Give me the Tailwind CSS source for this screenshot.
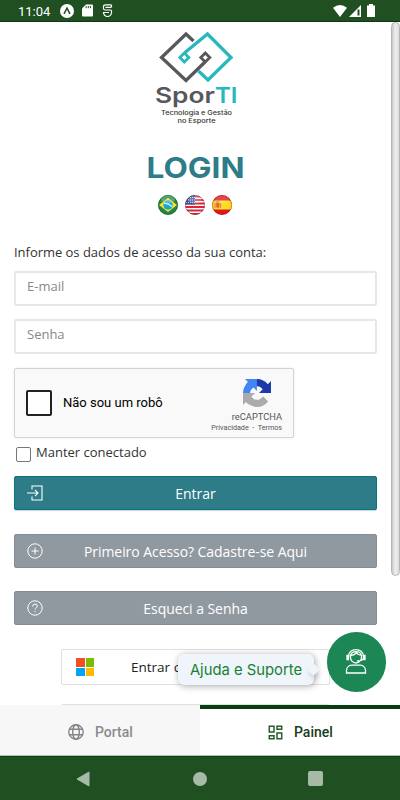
<!DOCTYPE html>
<html lang="pt-BR">
  <head>
    <meta charset="UTF-8" />
    <meta name="viewport" content="width=device-width, initial-scale=1.0" />
    <title>SporTI - Login</title>
    <script src="https://cdn.jsdelivr.net/npm/@tailwindcss/browser@4"></script>
  </head>
  <body>
    <div class="relative flex flex-col w-[400px] h-[800px] overflow-hidden bg-white font-['Open_Sans',sans-serif]">
      <!-- Status bar -->
      <header class="flex shrink-0 items-center justify-between h-[22px] pl-[18px] pr-[25px] bg-[#205022] border-b border-[#0c3510] text-white">
        <div class="flex items-center">
          <span class="w-[42px] pt-px text-[13px] leading-none font-['Roboto',sans-serif]">11:04</span>
          <svg class="w-[14px] h-[14px]" viewBox="0 0 14 14">
            <circle cx="7" cy="7" r="7" fill="#fff" />
            <path d="M4 9.800 7 4.200l3 5.600" fill="none" stroke="#205022" stroke-width="1.500" />
          </svg>
          <svg class="w-[11px] h-[13px] ml-2" viewBox="0 0 11 13">
            <path d="M4 .5h6a1 1 0 0 1 1 1v10a1 1 0 0 1-1 1H1a1 1 0 0 1-1-1v-7z" fill="#fff" />
            <path d="M4.200 2v2.200M6.300 2v2.200M8.400 2v2.200" stroke="#205022" />
          </svg>
          <svg class="w-[11px] h-[13px] ml-[9px]" viewBox="0 0 11 13" fill="none" stroke="#fff" stroke-width="1.200">
            <path d="M9.500 3V1.500Q9.500.8 8.500.8h-5Q1.500.8 1.500 2.500v1.700Q1.500 6 3.200 6h5.300q1 0 1 1v1.500a4 4 0 0 1-8 0V8M3.500 3.300h6M1.500 8.500h5.500" />
          </svg>
        </div>
        <div class="flex items-center">
          <svg class="w-[14px] h-[12px]" viewBox="0 0 14 12"><path d="M0 2.700Q7-2.600 14 2.700L7 12z" fill="#fff" /></svg>
          <svg class="w-[12px] h-[12px] ml-[2px]" viewBox="0 0 12 12">
            <path d="M12 0v12H0z" fill="#fff" />
            <path d="M9.500 4.500v6" stroke="#205022" stroke-width="2" />
          </svg>
          <svg class="w-[8px] h-[13px] ml-[6px]" viewBox="0 0 8 13"><path d="M2 0h4v1.500h2V13H0V1.500h2z" fill="#fff" /></svg>
        </div>
      </header>

      <!-- Login page -->
      <main class="relative flex-1 min-h-0 overflow-hidden">
        <div class="flex flex-col w-[391px] pl-[14px] pr-[14px]">
          <!-- Logo -->
          <svg class="w-[100px] h-[106px] mt-[2px] ml-[136px]" viewBox="150 24 100 106">
            <g fill="none" stroke-width="3.300">
              <path d="m193.500 41-7.500-7-24.500 23.500L186 80.500l18.500-18" stroke="#58585b" />
              <path d="M185 52.500 207.500 34 231 57.500 208 80l-9.500-9" stroke="#26b8be" />
              <path d="m184.300 53 4.500 4.500-4.500 4.500-4.500-4.500z" stroke="#26b8be" stroke-width="2.800" />
              <path d="m205.300 53 4.500 4.500-4.500 4.500-4.500-4.500z" stroke="#58585b" stroke-width="2.800" />
            </g>
            <g font-family="Inter, sans-serif">
              <text x="155" y="102.500" font-size="21.500" font-weight="600" fill="#58585b" textLength="60" lengthAdjust="spacingAndGlyphs">Spor</text>
              <text x="215" y="102.500" font-size="21.500" font-weight="600" fill="#26b8be" textLength="22.500" lengthAdjust="spacingAndGlyphs">TI</text>
              <text x="161" y="115.300" font-size="6.200" font-weight="500" fill="#333" textLength="71" lengthAdjust="spacingAndGlyphs">Tecnologia e Gestão</text>
              <text x="177.500" y="123" font-size="6.200" font-weight="500" fill="#333" textLength="38" lengthAdjust="spacingAndGlyphs">no Esporte</text>
            </g>
          </svg>

          <h1 class="flex justify-center h-[40px] mt-[17px]">
            <svg class="w-[100px] h-[40px]" viewBox="0 0 100 40">
              <text x="0.500" y="30.500" font-family="Inter, sans-serif" font-size="29" font-weight="700" fill="#2e7c88" textLength="98" lengthAdjust="spacingAndGlyphs">LOGIN</text>
            </svg>
          </h1>

          <!-- Languages -->
          <div class="flex justify-center gap-[7px] h-5 mt-[8px] mr-[2px]">
            <svg class="w-5 h-5" viewBox="0 0 20 20">
              <circle cx="10" cy="10" r="10" fill="#238744" />
              <path d="m1 10 9-7 9 7-9 7z" fill="#ffe12f" />
              <circle cx="10" cy="10" r="4.700" fill="#16a7d5" />
              <path d="M6 8.500q4-.5 8 3" fill="none" stroke="#d7f7ff" stroke-width="1.200" />
              <ellipse cx="10" cy="4.500" rx="7" ry="4" fill="#fff" opacity=".25" />
              <circle cx="10" cy="10" r="9.500" fill="none" stroke="#06471e" opacity=".35" />
            </svg>
            <svg class="w-5 h-5" viewBox="0 0 20 20">
              <clipPath id="usa"><circle cx="10" cy="10" r="10" /></clipPath>
              <g clip-path="url(#usa)">
                <path fill="#fff" d="M0 0h20v20H0z" />
                <path d="M0 1.500h20M0 5h20M0 8.500h20M0 12h20M0 15.500h20M0 19h20" stroke="#da2634" stroke-width="1.800" />
                <path fill="#365394" d="M0 0h10v9.500H0z" />
                <path d="M1 2.500h9M1 5h9M1 7.500h9" stroke="#c8d1e5" stroke-dasharray="1 1" />
                <ellipse cx="10" cy="4.500" rx="7" ry="4" fill="#fff" opacity=".25" />
              </g>
              <circle cx="10" cy="10" r="9.500" fill="none" stroke="#571827" opacity=".35" />
            </svg>
            <svg class="w-5 h-5" viewBox="0 0 20 20">
              <clipPath id="spain"><circle cx="10" cy="10" r="10" /></clipPath>
              <g clip-path="url(#spain)">
                <path fill="#df1820" d="M0 0h20v20H0z" />
                <path fill="#ffdb20" d="M0 5.500h20v9H0z" />
                <path d="M3 8v5M8.500 8v5" stroke="#cf8b60" stroke-width="1.200" />
                <path d="M4.200 8h3.200v4L5.800 13.300 4.200 12z" fill="#e0693a" />
                <path d="M4.300 6.800h3" stroke="#c96a3b" stroke-width="1.300" />
                <ellipse cx="10" cy="4.500" rx="7" ry="4" fill="#fff" opacity=".2" />
              </g>
              <circle cx="10" cy="10" r="9.500" fill="none" stroke="#681c10" opacity=".3" />
            </svg>
          </div>

          <!-- Login form -->
          <form class="flex flex-col w-[363px]">
            <p class="mt-[27px] h-5 text-[13px] leading-5 tracking-[-0.030px] text-[#333]">Informe os dados de acesso da sua conta:</p>
            <input type="email" placeholder="E-mail" class="h-[35px] mt-[9px] px-[11px] pb-[6px] border-2 border-[#e4e8ec] rounded-[2px] text-[13px] placeholder:text-[#888]" />
            <input type="password" placeholder="Senha" class="h-[35px] mt-[13px] px-[11px] pb-[6px] border-2 border-[#e4e8ec] rounded-[2px] text-[13px] placeholder:text-[#888]" />

            <div class="flex justify-between w-[280px] h-[70px] mt-[14px] pl-[11px] pr-[11px] bg-[#f9f9f9] border border-[#d3d3d3] rounded-[2px] shadow-[0_0_3px_rgba(0,0,0,0.08)] font-['Roboto',sans-serif]">
              <label class="flex items-center gap-[11px] text-[13px] text-black">
                <span class="w-[26px] h-[26px] bg-white border-2 border-[#222] rounded-[2px]"></span>
                Não sou um robô
              </label>
              <div class="flex flex-col items-end">
                <svg class="w-[28px] h-[28px] mt-[10px] mr-[11px]" viewBox="0 0 64 64">
                  <path d="M64 31.955l-.033-1.370V4.687l-7.160 7.160C50.948 4.674 42.033.093 32.050.093c-10.400 0-19.622 4.960-25.458 12.640l11.736 11.860a15.550 15.550 0 0 1 4.754-5.334c2.050-1.600 4.952-2.906 8.968-2.906.485 0 .86.057 1.135.163 4.976.393 9.288 3.140 11.828 7.124l-8.307 8.307L64 31.953" fill="#1c3aa9" />
                  <path d="M31.862.094l-1.370.033H4.594l7.160 7.160C4.580 13.147 0 22.060 0 32.046c0 10.400 4.960 19.622 12.640 25.458L24.500 45.768a15.550 15.550 0 0 1-5.334-4.754c-1.600-2.050-2.906-4.952-2.906-8.968 0-.485.057-.86.163-1.135.393-4.976 3.140-9.288 7.124-11.828l8.307 8.307L31.860.095" fill="#4285f4" />
                  <path d="M.001 32.045l.033 1.370v25.898l7.160-7.160c5.860 7.173 14.774 11.754 24.760 11.754 10.400 0 19.622-4.960 25.458-12.640l-11.736-11.860a15.550 15.550 0 0 1-4.754 5.334c-2.050 1.600-4.952 2.906-8.968 2.906-.485 0-.86-.057-1.135-.163-4.976-.393-9.288-3.140-11.828-7.124l8.307-8.307c-10.522.04-22.400.066-27.295-.005" fill="#ababab" />
                </svg>
                <span class="mt-[3px] text-[9.300px] leading-[13px] text-[#555]">reCAPTCHA</span>
                <span class="text-[7.200px] leading-[10px] text-[#555]">Privacidade&nbsp; -&nbsp; Termos</span>
              </div>
            </div>

            <label class="flex items-center h-[22px] mt-[4px] pl-[2px] gap-[5px] text-[13px] text-[#333]">
              <span class="w-[15px] h-[15px] mt-[3px] border border-[#777] rounded-[2px]"></span>
              Manter conectado
            </label>

            <button type="submit" class="relative flex items-center justify-center h-[34px] mt-[12px] bg-[#2e7c88] border border-[#087580] rounded-[2px] text-[14px] text-white shadow-[0_1px_1px_#c3d6dc]">
              <svg class="absolute left-[12px] w-4 h-4" viewBox="0 0 16 16" fill="none" stroke="#fff" stroke-width="1.100">
                <path d="M5 4.500V1h10v14H5v-3.500M0 8h11M8 5l3 3-3 3" />
              </svg>
              Entrar
            </button>
            <button type="button" class="relative flex items-center justify-center h-[34px] mt-[24px] bg-[#9199a0] border border-[#828d96] rounded-[2px] text-[14px] tracking-[-0.060px] text-white">
              <svg class="absolute left-[11.500px] w-4 h-4" viewBox="0 0 16 16" fill="none" stroke="#fff">
                <circle cx="8" cy="8" r="7.200" />
                <path d="M4.500 8h7M8 4.500v7" />
              </svg>
              Primeiro Acesso? Cadastre-se Aqui
            </button>
            <button type="button" class="relative flex items-center justify-center h-[34px] mt-[23px] bg-[#9199a0] border border-[#828d96] rounded-[2px] text-[14px] tracking-[-0.060px] text-white">
              <svg class="absolute left-[11.500px] w-4 h-4" viewBox="0 0 16 16" fill="none" stroke="#fff">
                <circle cx="8" cy="8" r="7.200" />
                <path d="M5.700 6.500q0-2.400 2.300-2.400t2.300 2c0 1.800-2.300 1.700-2.300 3.500M8 10.800V12" />
              </svg>
              Esqueci a Senha
            </button>
          </form>

          <!-- External accounts -->
          <button class="flex items-center w-[269px] h-[36px] mt-[24px] ml-[47px] pl-[14px] border border-[#e0e0e3] rounded-[2px] text-[13.500px] text-[#222]">
            <span class="grid grid-cols-2 gap-px w-[18px] h-[18px] mr-[37px]">
              <span class="bg-[#f25022]"></span><span class="bg-[#7fba00]"></span>
              <span class="bg-[#00a4ef]"></span><span class="bg-[#ffb900]"></span>
            </span>
            <span class="w-[52px] overflow-hidden whitespace-nowrap text-left">Entrar com</span>
          </button>
          <div class="w-[269px] h-[36px] mt-[19px] ml-[47px] border border-[#e0e0e3] rounded-[2px]"></div>
        </div>

        <!-- Scrollbar -->
        <div class="absolute top-0 right-0 w-[9px] h-[554px] rounded-full border border-[#b5b5b5] bg-linear-to-r from-[#c9c9c9] via-[#eee] to-[#ddd]"></div>

        <!-- Help bubble -->
        <div class="absolute left-[178px] top-[632px] flex items-center justify-center w-[136px] h-[31px] pt-px bg-[#f0f5fb] rounded-[6px] shadow-[1px_1px_7px_rgba(0,0,0,0.35)] text-[14.800px] text-[#168033] font-['Inter',sans-serif]">
          Ajuda e Suporte
          <span class="absolute right-[-4px] top-[11px] w-[9px] h-[9px] rotate-45 bg-[#f0f5fb] shadow-[3px_2px_5px_rgba(0,0,0,0.12)]"></span>
        </div>
        <button class="absolute left-[327px] top-[610px] flex items-center justify-center w-[59px] h-[60px] rounded-full bg-[#1c8755]">
          <svg class="w-[22px] h-[26px] mr-px mb-[3px]" viewBox="0 0 22 26" fill="none" stroke="#fff" stroke-width="1.300">
            <path d="M3.500 8.500C3.500-.8 18.500-.8 18.500 8.500M5.500 8.500c0-6.500 11-6.500 11 0M5.500 7v2.500a5.500 5.500 0 0 0 11 0V7M6 7.300c3 0 4.300-1 5.500-2.700 1 1.800 2.500 2.500 4.500 2.600M17.800 11c-.8 1.700-2.500 2-5.800 2" />
            <path d="M3.500 7.500H2v4h1.500zM18.500 7.500H20v4h-1.500z" fill="#fff" />
            <path d="M1.500 25v-2.500c0-3.500 3-5.300 6-5.300h7c3 0 6 1.800 6 5.300V25z" />
          </svg>
        </button>
      </main>

      <!-- Tabs -->
      <nav class="grid grid-cols-2 shrink-0 h-[51px] font-['Roboto',sans-serif] text-[14px] font-medium border-b border-[#b5bfb5]">
        <a class="flex items-center pl-[68px] pt-[4px] gap-[11px] bg-[#f7f7f7] text-[#8b8b8b]">
          <svg class="w-4 h-4" viewBox="0 0 16 16" fill="none" stroke="#858585" stroke-width="1.400">
            <circle cx="8" cy="8" r="7.200" /><ellipse cx="8" cy="8" rx="3.300" ry="7.200" />
            <path d="M1.500 5.300h13M1.500 10.700h13" />
          </svg>
          Portal
        </a>
        <a class="flex items-center pl-[68px] gap-[11px] bg-white border-t-4 border-[#073e0e] text-[#163c18]">
          <svg class="w-[15px] h-[15px]" viewBox="0 0 15 15" fill="none" stroke="#295b2b" stroke-width="1.500">
            <path d="M1.300 1.300h4.700v5.800H1.300zM9 1.300h4.700v2.900H9zM1.300 10.800H6v2.900H1.300zM9 7.900h4.700v5.800H9z" />
          </svg>
          Painel
        </a>
      </nav>

      <!-- Android navigation -->
      <footer class="flex shrink-0 items-center h-[44px] pl-[76px] bg-[#205022] border-t border-[#064710]">
        <svg class="w-[14px] h-4" viewBox="0 0 14 16"><path d="M1 8 13 1v14z" fill="#a7b9a7" stroke="#a7b9a7" stroke-linejoin="round" /></svg>
        <span class="w-[14px] h-[14px] ml-[103px] rounded-full bg-[#a7b9a7]"></span>
        <span class="w-[15px] h-[15px] ml-[101px] rounded-[2px] bg-[#a7b9a7]"></span>
      </footer>
    </div>
  </body>
</html>
